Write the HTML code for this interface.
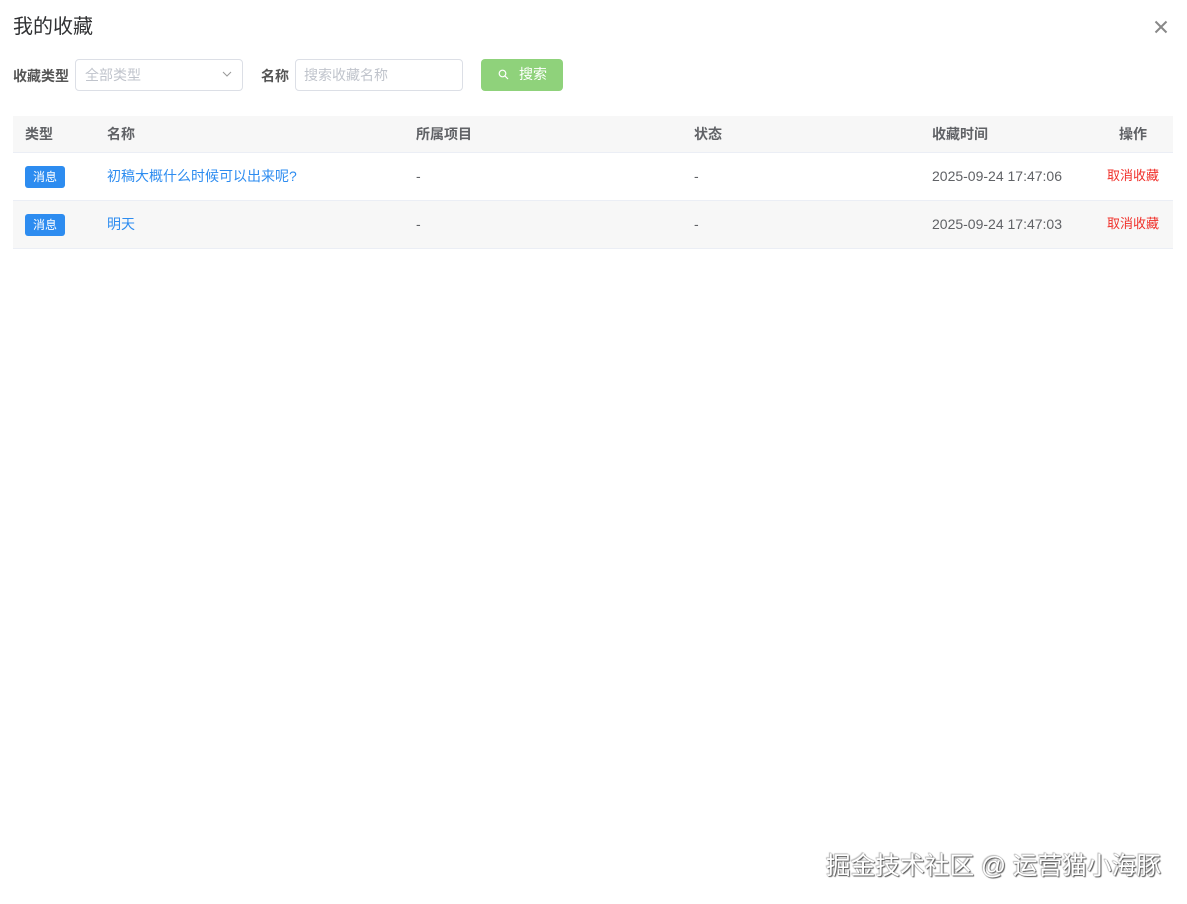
<!DOCTYPE html>
<html><head><meta charset="utf-8"><style>
body{margin:0;width:1187px;height:904px;background:#fff;font-family:"Liberation Sans","Noto Sans CJK SC",sans-serif;position:relative;overflow:hidden;color:#606266}
.a{position:absolute}
.t{font-size:14px;line-height:20px;height:20px}
</style></head><body>
<div class="a" style="left:13px;top:13px;font-size:20px;line-height:28px;color:#303133;">我的收藏</div>
<svg class="a" style="left:1154px;top:20px" width="14" height="14"><path d="M1.5 1.5L12.5 12.5M12.5 1.5L1.5 12.5" stroke="#888" stroke-width="2"/></svg>
<div class="a t" style="left:13px;top:66px;color:#555;font-weight:bold">收藏类型</div>
<div class="a" style="left:75px;top:59px;width:166px;height:30px;border:1px solid #dcdfe6;border-radius:4px"></div>
<div class="a t" style="left:85px;top:65px;color:#c0c4cc">全部类型</div>
<svg class="a" style="left:222px;top:71px" width="10" height="7"><path d="M1 1L5 5L9 1" stroke="#999" fill="none"/></svg>
<div class="a t" style="left:261px;top:66px;color:#555;font-weight:bold">名称</div>
<div class="a" style="left:295px;top:59px;width:166px;height:30px;border:1px solid #dcdfe6;border-radius:4px"></div>
<div class="a t" style="left:304px;top:65px;color:#c0c4cc">搜索收藏名称</div>
<div class="a" style="left:481px;top:59px;width:82px;height:32px;background:#8fd27b;border-radius:4px"></div>
<svg class="a" style="left:498px;top:69px" width="11" height="11"><circle cx="4.5" cy="4.5" r="3.3" stroke="#fff" fill="none" stroke-width="1.2"/><path d="M7 7L10 10" stroke="#fff" stroke-width="1.2"/></svg>
<div class="a t" style="left:519px;top:64px;color:#fff">搜索</div>
<div class="a" style="left:13px;top:116px;width:1160px;height:36px;background:#f7f7f7;border-bottom:1px solid #ebeef5"></div>
<div class="a" style="left:13px;top:153px;width:1160px;height:47px;border-bottom:1px solid #ebeef5"></div>
<div class="a" style="left:13px;top:201px;width:1160px;height:47px;background:#f7f7f7;border-bottom:1px solid #ebeef5"></div>
<div class="a t" style="top:124px;left:25px;font-weight:bold">类型</div>
<div class="a t" style="top:124px;left:107px;font-weight:bold">名称</div>
<div class="a t" style="top:124px;left:416px;font-weight:bold">所属项目</div>
<div class="a t" style="top:124px;left:694px;font-weight:bold">状态</div>
<div class="a t" style="top:124px;left:932px;font-weight:bold">收藏时间</div>
<div class="a t" style="top:124px;left:1119px;font-weight:bold">操作</div>
<div class="a" style="left:25px;top:166px;width:40px;height:22px;background:#2d8cf0;border-radius:3px;color:#fff;font-size:12px;line-height:22px;text-align:center">消息</div>
<div class="a" style="left:25px;top:214px;width:40px;height:22px;background:#2d8cf0;border-radius:3px;color:#fff;font-size:12px;line-height:22px;text-align:center">消息</div>
<div class="a t" style="top:166px;left:107px;color:#2d8cf0">初稿大概什么时候可以出来呢?</div>
<div class="a t" style="top:214px;left:107px;color:#2d8cf0">明天</div>
<div class="a t" style="top:166px;left:416px">-</div><div class="a t" style="top:214px;left:416px">-</div>
<div class="a t" style="top:166px;left:694px">-</div><div class="a t" style="top:214px;left:694px">-</div>
<div class="a t" style="top:166px;left:932px">2025-09-24 17:47:06</div>
<div class="a t" style="top:214px;left:932px">2025-09-24 17:47:03</div>
<div class="a t" style="top:166px;left:1107px;color:#f0302a;font-size:13px">取消收藏</div>
<div class="a t" style="top:214px;left:1107px;color:#f0302a;font-size:13px">取消收藏</div>
<div class="a" style="left:826px;top:850px;font-size:24.7px;line-height:34px;color:#fff;text-shadow:1px 1px 1px #555,-1px -1px 1px #bbb,0 0 1px #444;white-space:nowrap">掘金技术社区 @ 运营猫小海豚</div>
</body></html>
